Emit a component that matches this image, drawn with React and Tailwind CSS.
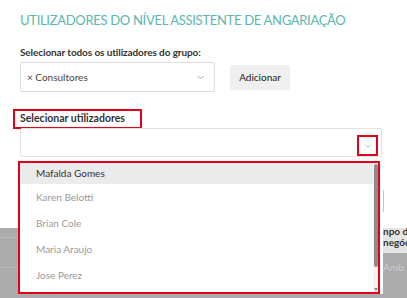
import { ChevronDown } from "lucide-react";

const users = ["Karen Belotti", "Brian Cole", "Maria Araujo", "Jose Perez"];

export default function App() {
  return (
    <div className="relative w-[407px] h-[298px] overflow-hidden bg-white font-['Lato',sans-serif]">
      <div className="px-5 pt-[12px]">
        <h2 className="text-[13px] leading-[16px] text-[#5cb6ae] tracking-[-0.3px] whitespace-nowrap">
          UTILIZADORES DO NÍVEL ASSISTENTE DE ANGARIAÇÃO
        </h2>

        {/* group select */}
        <p className="mt-[18px] text-[10px] leading-[12px] font-bold text-[#333] tracking-[-0.1px]">
          Selecionar todos os utilizadores do grupo:
        </p>
        <div className="mt-[4px] flex items-center gap-[15px]">
          <div className="w-[195px] h-[30px] border border-[#dcdcdc] rounded-[2px] flex items-center pl-[6px] pr-[8px]">
            <span className="text-[10px] text-[#444]">× Consultores</span>
            <ChevronDown className="ml-auto w-[11px] h-[11px] text-[#888]" strokeWidth={1.5} />
          </div>
          <button className="w-[60px] h-[25px] bg-[#efefef] rounded-[2px] text-[10px] text-[#222]">
            Adicionar
          </button>
        </div>

        {/* user select */}
        <div className="mt-[17px] -ml-[7px] w-[129px] h-[20px] border-2 border-[#e3001b] flex items-center pl-[5px]">
          <span className="text-[10.5px] font-bold text-[#333]">Selecionar utilizadores</span>
        </div>
        <div className="-mt-[1px] w-[362px] h-[29px] border border-[#e3e3e3] rounded-[2px] flex items-end justify-end pr-[3px]">
          <div className="w-[21px] h-[21px] border-2 border-[#e3001b] flex items-center justify-center">
            <ChevronDown className="w-[10px] h-[10px] text-[#888]" strokeWidth={1.5} />
          </div>
        </div>
      </div>

      {/* vertical edge of the panel behind */}
      <div className="absolute left-[383px] top-[190px] w-px h-[22px] bg-[#c8c8c8]" />

      {/* page content behind the dropdown */}
      <div className="mt-[71px] h-[70px] bg-[#ababab] flex">
        <div className="w-[18px] flex flex-col">
          <div className="h-[10px] border-b border-[#b9b9b9]" />
          <div className="h-[30px] border-b border-[#b9b9b9]" />
        </div>
        <div className="ml-auto w-[24px] flex flex-col text-[10px] whitespace-nowrap overflow-hidden">
          <div className="h-[27px] bg-[#e4e4e4] font-bold text-[#333] leading-[11px] -mt-[2px] pt-0">
            <div>npo d</div>
            <div>negóc</div>
          </div>
          <div className="mt-[7px] text-[#cdcdcd]">Amb</div>
        </div>
      </div>

      {/* open dropdown list */}
      <div className="absolute left-[18px] top-[161px] w-[362px] h-[133px] border-2 border-[#e3001b] bg-white flex shadow-[3px_0_0_#fff]">
        <div className="flex-1 flex flex-col">
          <div className="h-[21px] bg-[#ebebeb] flex items-center pl-[16px] text-[10px] text-[#333]">
            Mafalda Gomes
          </div>
          {users.map((u) => (
            <div key={u} className="h-[26px] flex items-center pl-[16px] text-[10px] text-[#9a9a9a]">
              {u}
            </div>
          ))}
        </div>
        <div className="w-[5px] flex flex-col items-center bg-[#f4f4f4]">
          <div className="mt-[1px] w-[4px] h-[103px] rounded-[2px] bg-[#8c8c8c]" />
          <div className="mt-auto mb-[1px] w-0 h-0 border-x-[2px] border-x-transparent border-t-[3px] border-t-[#8c8c8c]" />
        </div>
      </div>
    </div>
  );
}
